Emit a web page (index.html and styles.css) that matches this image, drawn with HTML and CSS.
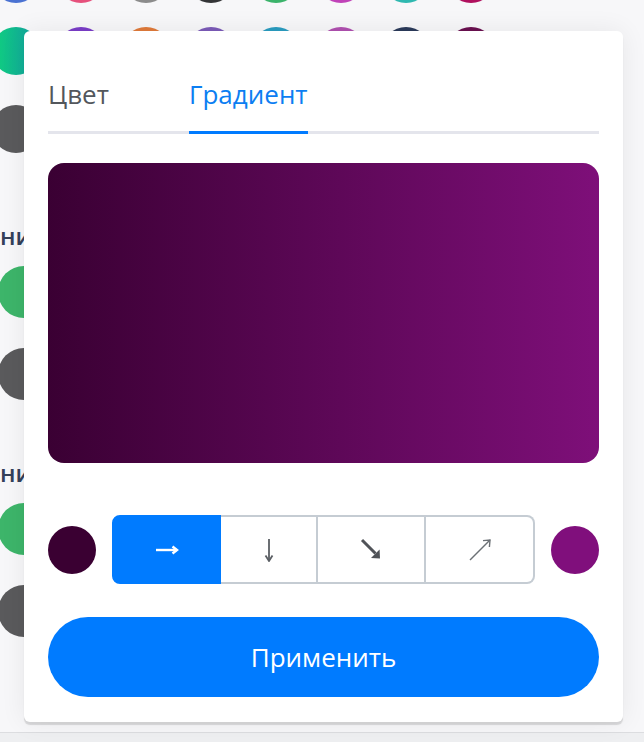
FILE: index.html
```html
<!DOCTYPE html>
<html>

<head>
    <title>Gradient Picker</title>
    <link rel="stylesheet" href="styles.css">
</head>

<body>
    <div class="backdrop">
        <div class="swatch-row row-first">
            <span class="swatch" style="background:#4a72d2"></span>
            <span class="swatch" style="background:#e6507c"></span>
            <span class="swatch" style="background:#8c8c8c"></span>
            <span class="swatch" style="background:#333436"></span>
            <span class="swatch" style="background:#3bb36b"></span>
            <span class="swatch" style="background:#c042b8"></span>
            <span class="swatch" style="background:#2fb8b0"></span>
            <span class="swatch" style="background:#b0105e"></span>
        </div>
        <div class="swatch-row row-second">
            <span class="swatch swatch-mint"></span>
            <span class="swatch" style="background:#7a3cc8"></span>
            <span class="swatch" style="background:#e07a3a"></span>
            <span class="swatch" style="background:#7b5ab8"></span>
            <span class="swatch" style="background:#2a9cc0"></span>
            <span class="swatch" style="background:#b050b0"></span>
            <span class="swatch" style="background:#2b3a5a"></span>
            <span class="swatch" style="background:#6a1050"></span>
        </div>
        <div class="swatch-row row-third">
            <span class="swatch swatch-gray"></span>
        </div>

        <section class="group">
            <h3 class="group-title">ни</h3>
            <div class="dot dot-green"></div>
            <div class="dot dot-gray"></div>
        </section>

        <section class="group">
            <h3 class="group-title">ни</h3>
            <div class="dot dot-green"></div>
            <div class="dot dot-gray"></div>
        </section>
    </div>

    <div class="page-foot"></div>

    <div class="picker">
        <div class="tabs">
            <div class="tab">Цвет</div>
            <div class="tab active">Градиент</div>
        </div>

        <div class="preview"></div>

        <div class="controls">
            <span class="stop stop-start"></span>
            <div class="directions">
                <button class="seg active">
                    <svg width="24" height="24" viewBox="0 0 24 24" fill="none" stroke="#fff" stroke-width="2.4">
                        <path d="M1 12h21" />
                        <path d="M17.5 8.5 22 12l-4.5 3.5" stroke-linejoin="miter" />
                    </svg>
                </button>
                <button class="seg">
                    <svg width="24" height="24" viewBox="0 0 24 24" fill="none" stroke="#5b5f64" stroke-width="1.8">
                        <path d="M12 1v21" />
                        <path d="M8.5 17.5 12 23l3.5-5.5" />
                    </svg>
                </button>
                <button class="seg">
                    <svg width="24" height="24" viewBox="0 0 24 24" fill="none">
                        <path d="M3 2l13.5 13.5" stroke="#505358" stroke-width="3" />
                        <path d="M21 20.5 20.6 11.5 12 20Z" fill="#505358" />
                    </svg>
                </button>
                <button class="seg">
                    <svg width="24" height="24" viewBox="0 0 24 24" fill="none" stroke="#6b7075" stroke-width="1.4">
                        <path d="M2 22 22 2" />
                        <path d="M15 2.6 22 2l-.6 7" />
                    </svg>
                </button>
            </div>
            <span class="stop stop-end"></span>
        </div>

        <button class="apply">Применить</button>
    </div>
</body>

</html>
```

FILE: styles.css
```css
body {
    margin: 0;
    background: #f7f7f9;
    font-family: "Open Sans", "Noto Sans", sans-serif;
    overflow: hidden;
}

/* page behind the popover */
.swatch-row {
    display: flex;
    gap: 17px;
    margin-left: -8px;
}

.row-first {
    margin-top: -45px;
}

.row-second {
    margin-top: 24px;
}

.row-third {
    margin-top: 30px;
}

.swatch {
    width: 48px;
    height: 48px;
    border-radius: 50%;
    flex-shrink: 0;
}

.swatch-mint {
    background: linear-gradient(90deg, #0fd27c, #139ca5);
}

.swatch-gray {
    background: #5a5a5c;
}

.group-title {
    margin: 67px 0 0;
    font-size: 24px;
    line-height: 32px;
    font-weight: 600;
    color: #34405a;
}

.group + .group .group-title {
    margin-top: 57px;
}

.dot {
    width: 52px;
    height: 52px;
    margin-left: -2px;
    border-radius: 50%;
}

.dot-green {
    margin-top: 14px;
    background: #3db56a;
}

.dot-gray {
    margin-top: 30px;
    background: #5a5a5c;
}

.page-foot {
    margin-top: 95px;
    height: 20px;
    border-top: 1px solid #dcdde0;
    background: #eeeff1;
}

/* popover */
.picker {
    position: absolute;
    top: 31px;
    left: 24px;
    width: 599px;
    box-sizing: border-box;
    padding: 46px 24px 25px;
    background: #fff;
    border-radius: 6px;
    box-shadow: 0 3px 1px rgba(0, 0, 0, 0.13), 0 0 26px rgba(0, 0, 0, 0.07);
}

.tabs {
    display: flex;
    gap: 80px;
    border-bottom: 3px solid #e4e5ec;
}

.tab {
    font-size: 26px;
    line-height: 35px;
    padding-bottom: 19px;
    margin-bottom: -3px;
    border-bottom: 3px solid transparent;
    color: #53575c;
}

.tab.active {
    color: #0c7ef2;
    border-bottom-color: #007bff;
}

.preview {
    margin-top: 29px;
    height: 300px;
    border-radius: 16px;
    background: linear-gradient(to right, #3a0033, #7e0f79);
}

.controls {
    display: flex;
    align-items: center;
    gap: 16px;
    margin-top: 52px;
}

.stop {
    width: 48px;
    height: 48px;
    border-radius: 50%;
    flex-shrink: 0;
}

.stop-start {
    background: #3a0032;
}

.stop-end {
    background: #800f7c;
}

.directions {
    flex: 1;
    display: grid;
    grid-template-columns: 109px 97px 108px 1fr;
    height: 69px;
}

.seg {
    display: flex;
    align-items: center;
    justify-content: center;
    padding: 0;
    background: #fff;
    border: 2px solid #c5ccd3;
    border-left: none;
    cursor: pointer;
}

.seg:first-child {
    border-left: 2px solid #c5ccd3;
    border-radius: 8px 0 0 8px;
}

.seg:last-child {
    border-radius: 0 8px 8px 0;
}

.seg.active {
    background: #007bff;
    border-color: #007bff;
}

.apply {
    display: block;
    width: 100%;
    height: 80px;
    margin-top: 33px;
    border: none;
    border-radius: 40px;
    background: #007bff;
    color: #fff;
    font-family: "Open Sans", "Noto Sans", sans-serif;
    font-size: 26px;
    cursor: pointer;
}
```
